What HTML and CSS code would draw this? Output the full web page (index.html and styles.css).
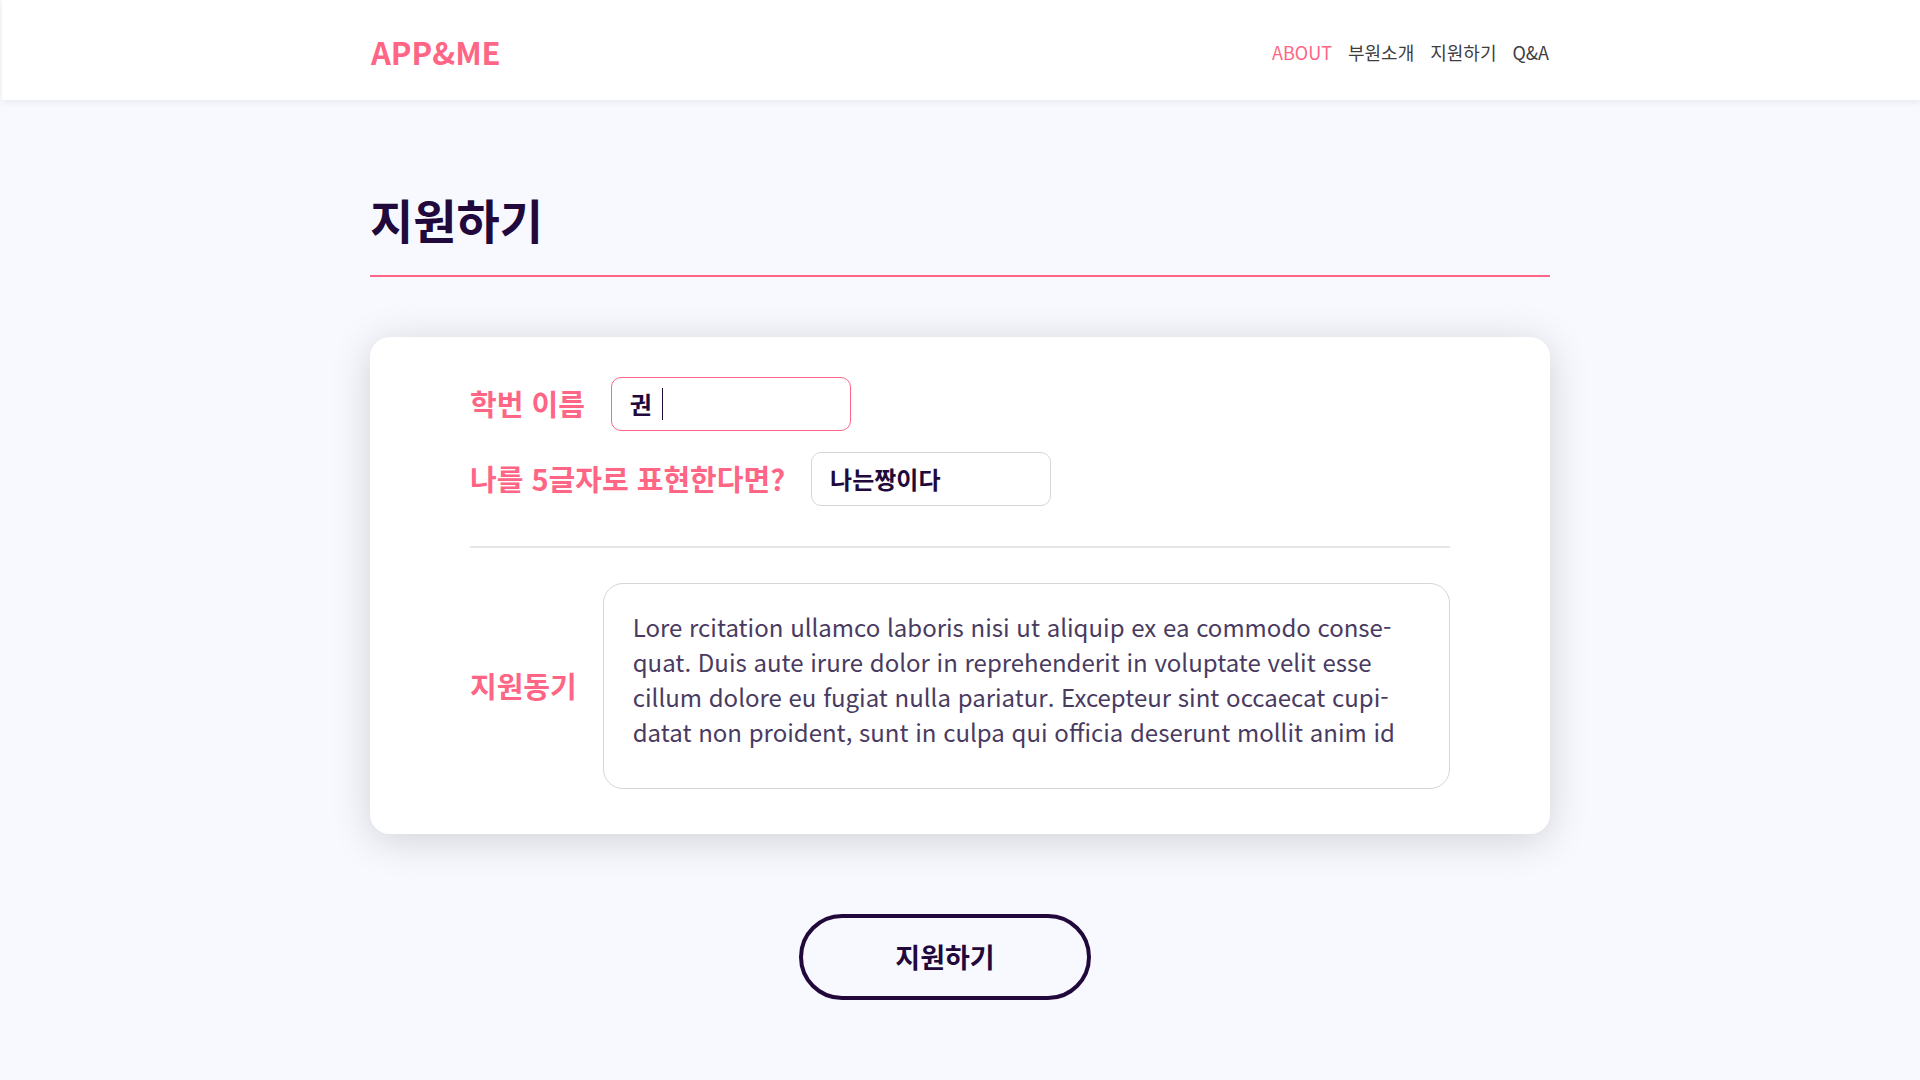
FILE: index.html
```html
<!DOCTYPE html>
<html lang="ko">
<head>
<meta charset="utf-8">
<meta name="viewport" content="width=device-width, initial-scale=1">
<title>APP&amp;ME - 지원하기</title>
<link rel="stylesheet" href="styles.css">
</head>
<body>
<header class="site-header">
  <div class="header-inner">
    <a class="logo" href="#">APP&amp;ME</a>
    <nav class="nav">
      <a class="nav-link active" href="#about">ABOUT</a>
      <a class="nav-link" href="#members">부원소개</a>
      <a class="nav-link" href="#apply">지원하기</a>
      <a class="nav-link" href="#qna">Q&amp;A</a>
    </nav>
  </div>
</header>
<main class="page">
  <h1 class="page-title">지원하기</h1>
  <form class="apply-form" id="apply">
    <div class="card">
      <div class="field">
        <label class="label" for="name">학번 이름</label>
        <div class="input-wrap">
          <input class="input input-active" id="name" type="text" value="권">
          <span class="caret"></span>
        </div>
      </div>
      <div class="field">
        <label class="label" for="five">나를 5글자로 표현한다면?</label>
        <input class="input" id="five" type="text" value="나는짱이다">
      </div>
      <hr class="divider">
      <div class="field">
        <label class="label" for="reason">지원동기</label>
        <textarea class="textarea" id="reason" rows="4" spellcheck="false">Lore rcitation ullamco laboris nisi ut aliquip ex ea commodo conse-
quat. Duis aute irure dolor in reprehenderit in voluptate velit esse
cillum dolore eu fugiat nulla pariatur. Excepteur sint occaecat cupi-
datat non proident, sunt in culpa qui officia deserunt mollit anim id</textarea>
      </div>
    </div>
    <button class="submit" type="button">지원하기</button>
  </form>
</main>
</body>
</html>
```
FILE: styles.css
```css
:root {
  --pink: #ff6584;
  --navy: #22093c;
  --line: #d6d6da;
}

* {
  box-sizing: border-box;
}

body {
  margin: 0;
  min-height: 100vh;
  background: #f8f9ff;
  color: var(--navy);
  font-family: "Noto Sans CJK KR", "Noto Sans", sans-serif;
}

input,
textarea,
button {
  font-family: inherit;
  color: inherit;
}

.site-header {
  margin-left: 2px;
  background: #fff;
  box-shadow: 0 3px 6px rgba(0, 0, 0, 0.06);
}

.header-inner {
  display: flex;
  align-items: center;
  justify-content: space-between;
  max-width: 1180px;
  min-height: 100px;
  margin: 0 auto;
  padding: 3px 2px 0 0;
}

.logo {
  color: var(--pink);
  font-size: 31px;
  font-weight: 700;
  line-height: 48px;
  text-decoration: none;
}

.nav {
  display: flex;
  gap: 16px;
}

.nav-link {
  color: #3f3d3f;
  font-size: 18px;
  line-height: 28px;
  text-decoration: none;
}

.nav-link.active {
  color: var(--pink);
}

.page {
  max-width: 1180px;
  margin: 0 auto;
  padding: 81px 0 80px;
}

.page-title {
  margin: 0 0 60px;
  padding-bottom: 18px;
  border-bottom: 2px solid var(--pink);
  font-size: 47px;
  font-weight: 700;
  line-height: 76px;
}

.apply-form {
  display: flex;
  flex-direction: column;
  align-items: center;
  gap: 80px;
}

.card {
  display: flex;
  flex-direction: column;
  gap: 21px;
  width: 100%;
  padding: 40px 100px 45px;
  border-radius: 20px;
  background: #fff;
  box-shadow: 0 6px 40px rgba(0, 0, 0, 0.16);
}

.field {
  display: flex;
  align-items: center;
  gap: 26px;
}

.label {
  flex: none;
  padding-bottom: 2px;
  color: var(--pink);
  font-size: 29px;
  font-weight: 700;
  line-height: 44px;
}

.input-wrap {
  position: relative;
}

.input {
  display: block;
  width: 240px;
  height: 54px;
  padding: 0 18px 2px;
  border: 1px solid var(--line);
  border-radius: 10px;
  outline: none;
  background: #fff;
  font-size: 24px;
  font-weight: 700;
}

.input-active {
  border-color: var(--pink);
}

.caret {
  position: absolute;
  top: 11px;
  left: 51px;
  width: 1px;
  height: 32px;
  background: var(--navy);
}

.divider {
  width: 100%;
  height: 2px;
  margin: 19px 0 14px;
  border: 0;
  background: #e6e6e6;
}

.textarea {
  flex: 1;
  min-width: 0;
  height: 206px;
  padding: 25px 29px;
  border: 1px solid var(--line);
  border-radius: 20px;
  outline: none;
  overflow: hidden;
  resize: none;
  background: #fff;
  color: #493b5f;
  font-size: 24px;
  line-height: 35px;
}

.submit {
  width: 292px;
  height: 86px;
  margin-right: 30px;
  padding: 0 0 2px;
  border: 4px solid var(--navy);
  border-radius: 43px;
  background: transparent;
  font-size: 27px;
  font-weight: 700;
}
```
